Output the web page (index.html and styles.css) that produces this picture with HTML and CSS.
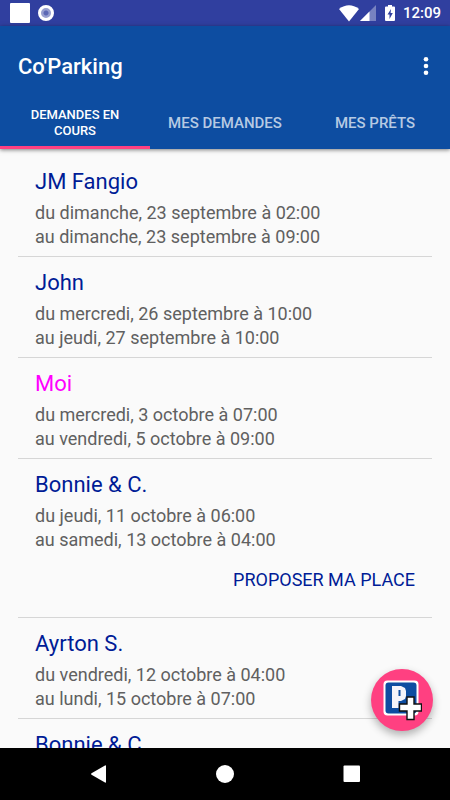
FILE: index.html
```
<!DOCTYPE html>
<html lang="fr">
<head>
    <meta charset="UTF-8">
    <meta name="viewport" content="width=device-width, initial-scale=1.0">
    <title>Co'Parking</title>
    <link rel="stylesheet" href="styles.css">
</head>
<body>
    <!-- Status bar -->
    <div class="status-bar">
        <span class="notif-square"></span>
        <span class="notif-circle"></span>
        <div class="status-icons">
            <svg class="wifi" width="20" height="17" viewBox="0 0 20 17">
                <path d="M0 4 Q10 -3.5 20 4 L10 16.5 Z" fill="#fff"/>
            </svg>
            <svg class="signal" width="16" height="16" viewBox="0 0 16 16">
                <path d="M16 0 V16 H0 Z" fill="#fff" fill-opacity="0.35"/>
                <path d="M9.5 6.5 V16 H0 Z" fill="#fff"/>
            </svg>
            <svg class="battery" width="10" height="16" viewBox="0 0 10 16">
                <path d="M3 0 H7 V1.5 H9 Q10 1.5 10 2.5 V15 Q10 16 9 16 H1 Q0 16 0 15 V2.5 Q0 1.5 1 1.5 H3 Z" fill="#fff"/>
                <path d="M6 4 L2.5 9.5 H4.5 V14 L7.8 8 H5.6 Z" fill="#303f9f"/>
            </svg>
            <span class="clock">12:09</span>
        </div>
    </div>

    <!-- App bar and tabs -->
    <header class="app-bar">
        <div class="toolbar">
            <h1 class="title">Co'Parking</h1>
            <button class="menu-button" aria-label="Plus d'options">
                <svg width="6" height="18" viewBox="0 0 6 18" fill="#fff">
                    <circle cx="3" cy="2.3" r="2.3"/>
                    <circle cx="3" cy="9" r="2.3"/>
                    <circle cx="3" cy="15.7" r="2.3"/>
                </svg>
            </button>
        </div>
        <nav class="tabs">
            <button class="tab active">Demandes en cours</button>
            <button class="tab">Mes demandes</button>
            <button class="tab">Mes prêts</button>
        </nav>
    </header>

    <!-- Current requests -->
    <main class="content">
        <ul class="requests">
            <li class="request">
                <h2 class="name">JM Fangio</h2>
                <p class="date">du dimanche, 23 septembre à 02:00</p>
                <p class="date">au dimanche, 23 septembre à 09:00</p>
            </li>
            <li class="request">
                <h2 class="name">John</h2>
                <p class="date">du mercredi, 26 septembre à 10:00</p>
                <p class="date">au jeudi, 27 septembre à 10:00</p>
            </li>
            <li class="request">
                <h2 class="name me">Moi</h2>
                <p class="date">du mercredi, 3 octobre à 07:00</p>
                <p class="date">au vendredi, 5 octobre à 09:00</p>
            </li>
            <li class="request">
                <h2 class="name">Bonnie &amp; C.</h2>
                <p class="date">du jeudi, 11 octobre à 06:00</p>
                <p class="date">au samedi, 13 octobre à 04:00</p>
                <button class="offer-button">Proposer ma place</button>
            </li>
            <li class="request">
                <h2 class="name">Ayrton S.</h2>
                <p class="date">du vendredi, 12 octobre à 04:00</p>
                <p class="date">au lundi, 15 octobre à 07:00</p>
            </li>
            <li class="request">
                <h2 class="name">Bonnie &amp; C.</h2>
            </li>
        </ul>

        <button class="fab" aria-label="Ajouter une demande">
            <svg width="39" height="41" viewBox="0 0 39 41">
                <rect x="0.5" y="0.5" width="35" height="35" rx="4" fill="#fff"/>
                <rect x="2.5" y="2.5" width="31" height="31" rx="3" fill="#0d4da1"/>
                <path d="M9 6 H18 L22 8 L23 11 V16 L22 19 L18 21 H15.5 V28 H9 Z M15.5 10 V16 H17.5 V10 Z" fill="#f4f4fa" fill-rule="evenodd"/>
                <path d="M24 17 H31 V24 H38.5 V31 H31 V39.5 H24 V31 H16.5 V24 H24 Z" fill="#fff" stroke="#111" stroke-width="1.4"/>
            </svg>
        </button>
    </main>

    <!-- System navigation -->
    <nav class="nav-bar">
        <button class="nav-button" aria-label="Retour">
            <svg width="18" height="18" viewBox="0 0 18 18" fill="#fff">
                <path d="M17 1 V17 Q17 18 16 17.5 L2.5 9.8 Q1.5 9 2.5 8.2 L16 0.5 Q17 0 17 1 Z"/>
            </svg>
        </button>
        <button class="nav-button" aria-label="Accueil">
            <svg width="18" height="18" viewBox="0 0 18 18" fill="#fff">
                <circle cx="9" cy="9" r="9"/>
            </svg>
        </button>
        <button class="nav-button" aria-label="Applications récentes">
            <svg width="18" height="18" viewBox="0 0 18 18" fill="#fff">
                <rect x="0.5" y="0.5" width="16.5" height="16.5" rx="1"/>
            </svg>
        </button>
    </nav>
</body>
</html>
```
FILE: styles.css
```
* {
    box-sizing: border-box;
}
body {
    display: flex;
    flex-direction: column;
    height: 100vh;
    margin: 0;
    overflow: hidden;
    background-color: #fafafa;
    font-family: Roboto, sans-serif;
}
button {
    padding: 0;
    border: none;
    background: none;
    font-family: inherit;
    cursor: pointer;
}
svg {
    display: block;
}
.status-bar {
    display: flex;
    align-items: center;
    flex-shrink: 0;
    gap: 8px;
    height: 26px;
    padding: 0 9px 0 10px;
    background-color: #303f9f;
}
.notif-square {
    width: 20px;
    height: 20px;
    border-radius: 1px;
    background-color: #fff;
}
.notif-circle {
    width: 16px;
    height: 16px;
    border: 3px solid #fff;
    border-radius: 50%;
    background: radial-gradient(circle, #5c68b5 2px, #979fd0 3px);
}
.status-icons {
    display: flex;
    align-items: center;
    margin-left: auto;
}
.signal {
    margin: 0 9px 0 1px;
}
.clock {
    margin-left: 8px;
    font-size: 15px;
    font-weight: 500;
    line-height: 26px;
    color: #fff;
}
.app-bar {
    position: relative;
    flex-shrink: 0;
    background-color: #0d4da1;
    box-shadow: 0 1px 4px rgba(0, 0, 0, 0.5);
}
.toolbar {
    display: flex;
    align-items: center;
    justify-content: space-between;
    height: 80px;
    padding: 0 12px 0 18px;
}
.title {
    margin: 0;
    font-size: 22px;
    font-weight: 500;
    color: #fff;
}
.menu-button {
    display: flex;
    justify-content: center;
    width: 24px;
}
.tabs {
    display: flex;
    height: 43px;
}
.tab {
    flex: 1;
    padding: 0 14px 6px;
    border-bottom: 3px solid transparent;
    font-size: 15px;
    font-weight: 500;
    text-transform: uppercase;
    color: #b6cae3;
}
.tab.active {
    border-bottom-color: #ff4081;
    font-size: 13px;
    line-height: 16px;
    color: #fff;
}
.content {
    position: relative;
    flex: 1;
    min-height: 0;
    overflow: hidden;
}
.requests {
    margin: 0;
    padding: 7px 18px 0;
    list-style: none;
}
.request {
    display: flex;
    flex-direction: column;
    padding: 12px 17px 7px;
    border-bottom: 1px solid #d6d6d6;
}
.name {
    margin: 0 0 5px;
    font-size: 22px;
    font-weight: 400;
    line-height: 28px;
    color: #001c96;
}
.name.me {
    color: #ff00ff;
}
.date {
    margin: 0;
    font-size: 18px;
    line-height: 24px;
    color: #606060;
}
.offer-button {
    align-self: flex-end;
    height: 54px;
    margin-bottom: 4px;
    font-size: 18px;
    text-transform: uppercase;
    color: #001c96;
}
/* Floating button over the list */
.fab {
    position: absolute;
    right: 17px;
    bottom: 17px;
    display: flex;
    align-items: center;
    justify-content: center;
    width: 62px;
    height: 62px;
    border-radius: 50%;
    background-color: #ff4081;
    box-shadow: 0 4px 8px rgba(0, 0, 0, 0.3);
}
.nav-bar {
    display: flex;
    align-items: center;
    justify-content: center;
    flex-shrink: 0;
    gap: 79px;
    height: 52px;
    background-color: #000;
}
.nav-button {
    display: flex;
    justify-content: center;
    width: 48px;
}
```
